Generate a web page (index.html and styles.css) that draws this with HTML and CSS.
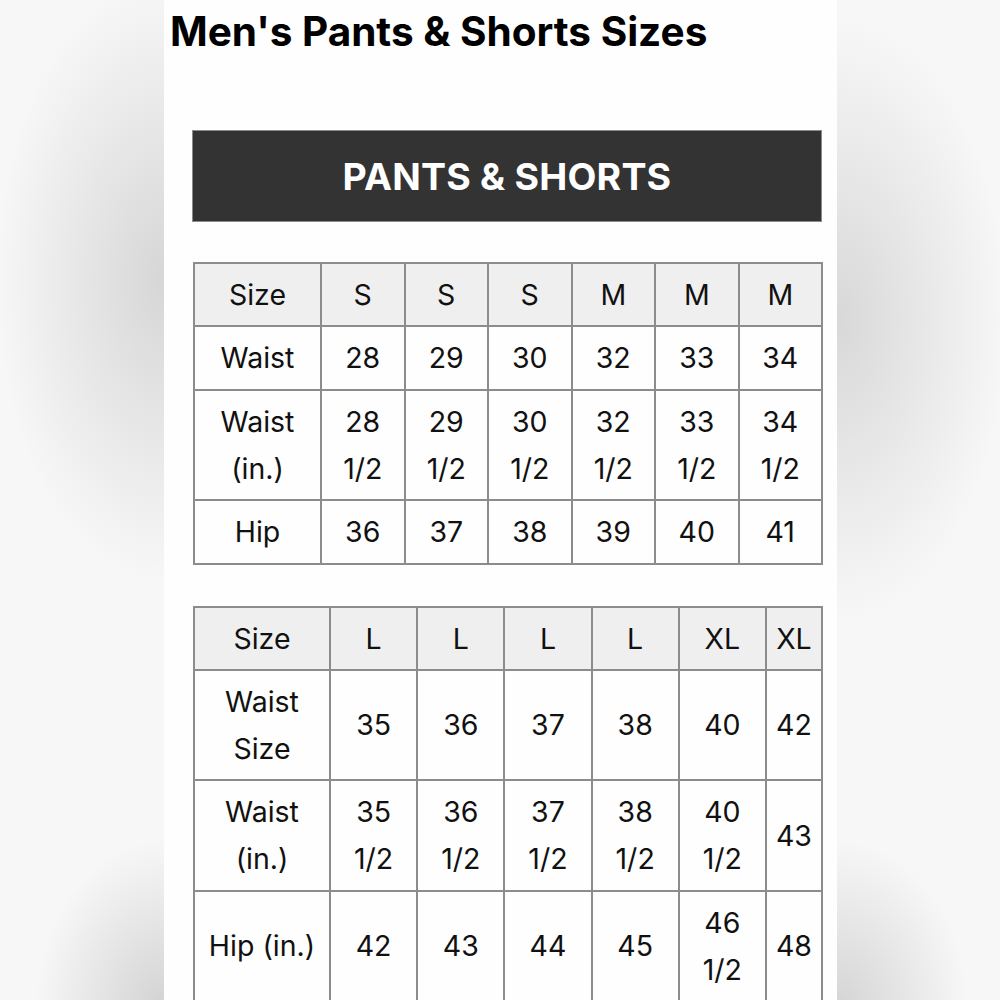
FILE: index.html
```html
<!DOCTYPE html>
<html>
<head>
<meta charset="utf-8">
<link rel="stylesheet" href="styles.css">
</head>
<body>
<div class="page">
  <h1 class="title">Men's Pants &amp; Shorts Sizes</h1>
  <div class="content">
    <div class="banner">PANTS &amp; SHORTS</div>
    <table class="chart chart-a">
      <colgroup>
        <col class="a-first"><col class="a-col"><col class="a-col"><col class="a-col"><col class="a-col"><col class="a-col"><col class="a-col">
      </colgroup>
      <tr class="head"><td>Size</td><td>S</td><td>S</td><td>S</td><td>M</td><td>M</td><td>M</td></tr>
      <tr><td>Waist</td><td>28</td><td>29</td><td>30</td><td>32</td><td>33</td><td>34</td></tr>
      <tr><td>Waist<br>(in.)</td><td>28<br>1/2</td><td>29<br>1/2</td><td>30<br>1/2</td><td>32<br>1/2</td><td>33<br>1/2</td><td>34<br>1/2</td></tr>
      <tr><td>Hip</td><td>36</td><td>37</td><td>38</td><td>39</td><td>40</td><td>41</td></tr>
    </table>
    <table class="chart chart-b">
      <colgroup>
        <col class="b-first"><col class="b-col"><col class="b-col"><col class="b-col"><col class="b-col"><col class="b-col"><col class="b-last">
      </colgroup>
      <tr class="head"><td>Size</td><td>L</td><td>L</td><td>L</td><td>L</td><td>XL</td><td>XL</td></tr>
      <tr><td>Waist<br>Size</td><td>35</td><td>36</td><td>37</td><td>38</td><td>40</td><td>42</td></tr>
      <tr><td>Waist<br>(in.)</td><td>35<br>1/2</td><td>36<br>1/2</td><td>37<br>1/2</td><td>38<br>1/2</td><td>40<br>1/2</td><td>43</td></tr>
      <tr><td>Hip (in.)</td><td>42</td><td>43</td><td>44</td><td>45</td><td>46<br>1/2</td><td>48</td></tr>
    </table>
  </div>
</div>
</body>
</html>
```
FILE: styles.css
```css
html, body {
  margin: 0;
  padding: 0;
}
body {
  width: 1000px;
  height: 1000px;
  overflow: hidden;
  background:
    radial-gradient(ellipse 170px 300px at 165px 280px, #d6d6d6 0%, rgba(214,214,214,0) 100%),
    radial-gradient(ellipse 170px 300px at 838px 320px, #d8d8d8 0%, rgba(216,216,216,0) 100%),
    radial-gradient(ellipse 130px 170px at 165px 1010px, #d2d2d2 0%, rgba(210,210,210,0) 100%),
    radial-gradient(ellipse 130px 170px at 838px 1010px, #d4d4d4 0%, rgba(212,212,212,0) 100%),
    #f7f7f7;
  font-family: Inter, "Liberation Sans", Arial, sans-serif;
  color: #111;
}
.page {
  width: 673px;
  height: 1000px;
  margin-left: 164px;
  background: #fefefe;
}
.title {
  margin: 0;
  padding: 9px 0 0 6px;
  font-size: 40.5px;
  line-height: 46px;
  font-weight: 700;
  letter-spacing: 0;
  color: #000;
}
.content {
  padding: 75px 15px 0 28px;
}
.banner {
  height: 90px;
  background: #333333;
  border: 1px solid #8a8a8a;
  color: #fff;
  font-size: 37.5px;
  font-weight: 700;
  display: flex;
  align-items: center;
  justify-content: center;
  letter-spacing: 0.2px;
}
.chart {
  border-collapse: collapse;
  table-layout: fixed;
  width: 628px;
  margin-left: 1px;
  font-size: 28.5px;
  line-height: 47px;
}
.chart-a { margin-top: 40px; }
.chart-b { margin-top: 41px; }
.chart td {
  border: 2px solid #8c8c8c;
  text-align: center;
  vertical-align: middle;
  padding: 7px 0 7.4px;
  color: #111;
}
.chart .head td {
  background: #efefef;
}
.a-first { width: 127px; }
.a-col { width: 83.5px; }
.b-first { width: 136px; }
.b-col { width: 87.2px; }
.b-last { width: 56px; }
```
